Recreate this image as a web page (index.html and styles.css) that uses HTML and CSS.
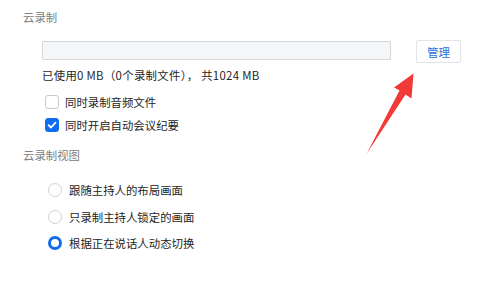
FILE: index.html
```html
<!DOCTYPE html>
<html lang="zh-CN">
<head>
<meta charset="utf-8">
<title>云录制</title>
<link rel="stylesheet" href="styles.css">
</head>
<body>
<div class="page">
  <div class="section-title first">云录制</div>
  <div class="storage-row">
    <div class="usage-bar"></div>
    <button class="manage-btn">管理</button>
  </div>
  <div class="usage-text">已使用0 MB（0个录制文件）， 共1024 MB</div>
  <label class="check-row first-check">
    <span class="checkbox"></span>
    <span class="label">同时录制音频文件</span>
  </label>
  <label class="check-row">
    <span class="checkbox checked">
      <svg viewBox="0 0 14 14" width="14" height="14"><path d="M3.6 7.2 L6 9.5 L10.5 4.6" fill="none" stroke="#fff" stroke-width="1.8" stroke-linecap="round" stroke-linejoin="round"/></svg>
    </span>
    <span class="label">同时开启自动会议纪要</span>
  </label>

  <div class="section-title second">云录制视图</div>
  <label class="radio-row first-radio">
    <span class="radio"></span>
    <span class="label">跟随主持人的布局画面</span>
  </label>
  <label class="radio-row">
    <span class="radio"></span>
    <span class="label">只录制主持人锁定的画面</span>
  </label>
  <label class="radio-row">
    <span class="radio checked"></span>
    <span class="label">根据正在说话人动态切换</span>
  </label>
</div>
<svg class="arrow" width="480" height="292" viewBox="0 0 480 292">
  <polygon points="413.5,73.5 394,87.5 399.5,90.5 366.5,154 405.5,94.5 411.5,98.5" fill="#f23a36"/>
</svg>
</body>
</html>
```
FILE: styles.css
```css
html, body {
  margin: 0;
  padding: 0;
  background: #ffffff;
}
body {
  width: 480px;
  height: 292px;
  overflow: hidden;
  position: relative;
  font-family: "Noto Sans CJK SC", "Noto Sans", sans-serif;
  font-size: 11.4px;
  line-height: 16px;
  color: #1e1e1e;
}
.page {
  padding-left: 23px;
  display: flex;
  flex-direction: column;
  align-items: flex-start;
}
.section-title {
  color: #808080;
}
.section-title.first {
  margin-top: 9px;
}
.section-title.second {
  margin-top: 14px;
}
.storage-row {
  margin-top: 15px;
  display: flex;
  align-items: flex-start;
}
.usage-bar {
  margin-left: 19px;
  margin-top: 1px;
  width: 349px;
  height: 19px;
  box-sizing: border-box;
  border: 1px solid #d6d7da;
  border-radius: 1px;
  background: #f5f6f8;
}
.manage-btn {
  margin-left: 25px;
  width: 45px;
  height: 23px;
  box-sizing: border-box;
  border: 1px solid #e3e4e6;
  border-radius: 2px;
  background: #ffffff;
  color: #1f6fd8;
  font-family: inherit;
  font-size: 11.4px;
  line-height: 16px;
  padding: 0;
}
.usage-text {
  margin-left: 19px;
  margin-top: 4px;
  letter-spacing: 0.3px;
}
.check-row {
  display: flex;
  align-items: center;
  height: 16px;
  margin-left: 22px;
  margin-top: 7px;
}
.check-row.first-check {
  margin-top: 11px;
}
.checkbox {
  width: 14px;
  height: 14px;
  box-sizing: border-box;
  border: 1px solid #c9cacc;
  border-radius: 3px;
  background: #fff;
  margin-right: 6px;
  display: flex;
}
.checkbox.checked {
  background: #0f6cf0;
  border-color: #0f6cf0;
}
.checkbox.checked svg {
  margin: -1px;
}
.radio-row {
  display: flex;
  align-items: center;
  height: 16px;
  margin-left: 25px;
  margin-top: 10.5px;
}
.radio-row.first-radio {
  margin-top: 19px;
}
.radio {
  width: 14px;
  height: 14px;
  box-sizing: border-box;
  border: 1px solid #d2d3d5;
  border-radius: 50%;
  background: #fff;
  margin-right: 7px;
}
.radio.checked {
  border: 3.5px solid #0f6cf0;
}
.arrow {
  position: absolute;
  left: 0;
  top: 0;
  pointer-events: none;
}
```
